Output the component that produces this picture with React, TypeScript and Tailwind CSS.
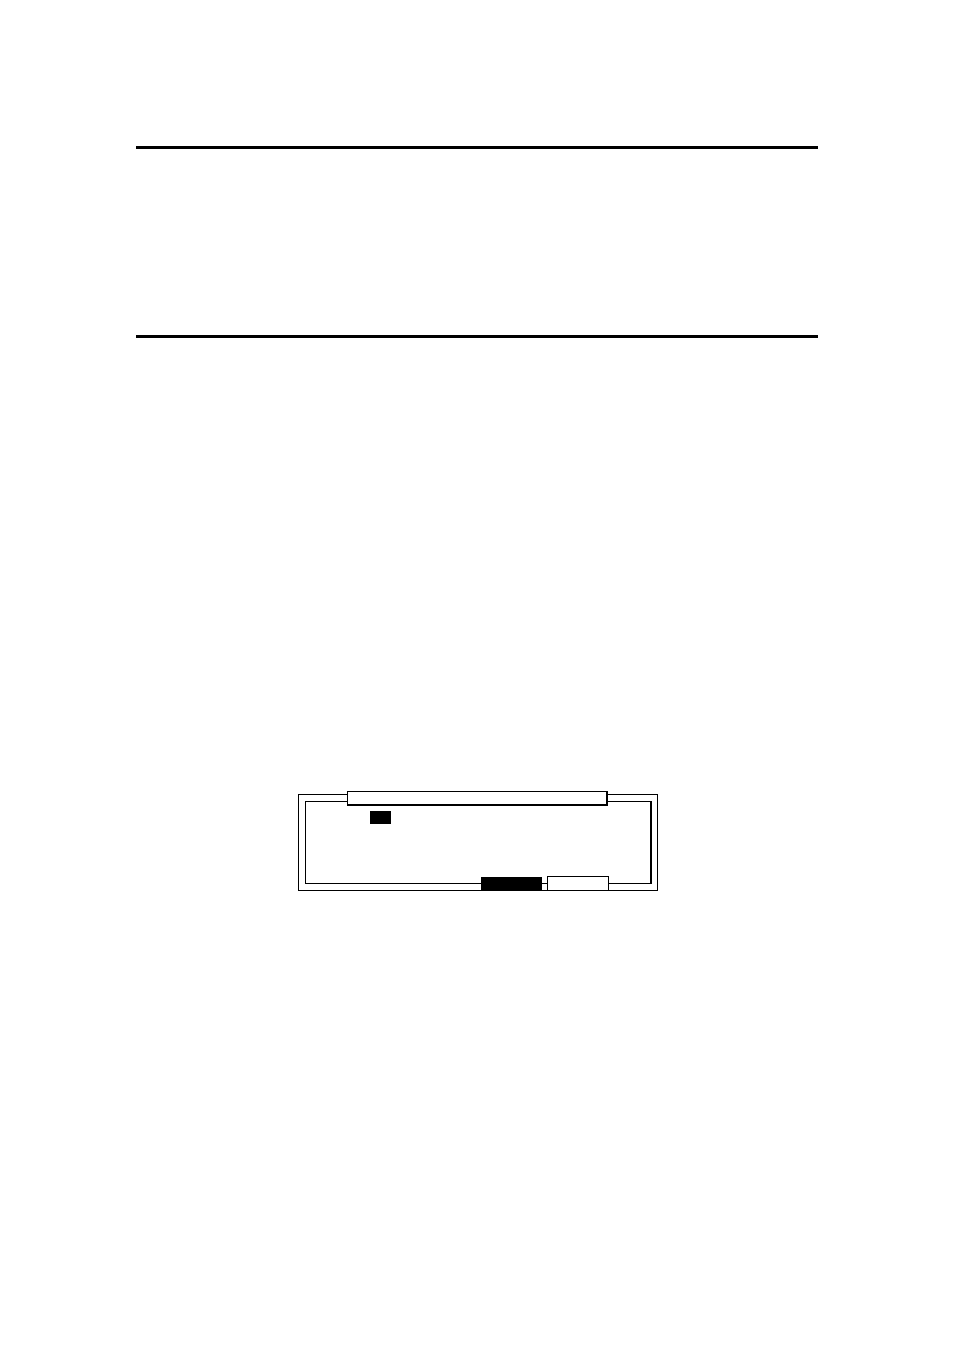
function SectionHeader() {
  return <header className="min-h-48 border-y-3 border-black" />;
}

function DialogFrame() {
  return (
    <section className="relative ml-[162px] max-w-[360px] border border-black bg-white py-1.5 pr-[5px] pl-1.5">
      <div className="min-h-[83px] border border-r-2 border-black pt-[9px] pl-16">
        <div className="h-[13px] w-[21px] bg-black" />
      </div>

      {/* Title bar and actions sit on top of the frame's edges */}
      <div className="absolute -top-1 right-[49px] left-12 h-[15px] border border-r-2 border-b-2 border-black bg-white" />
      <div className="absolute right-12 -bottom-px flex items-end gap-[5px]">
        <button type="button" aria-label="Confirm" className="h-3.5 w-[61px] bg-black" />
        <button type="button" aria-label="Cancel" className="h-[15px] w-[62px] border border-black bg-white" />
      </div>
    </section>
  );
}

export default function App() {
  return (
    <main className="flex min-h-screen flex-col gap-[456px] bg-white px-[136px] pt-[146px]">
      <SectionHeader />
      <DialogFrame />
    </main>
  );
}
